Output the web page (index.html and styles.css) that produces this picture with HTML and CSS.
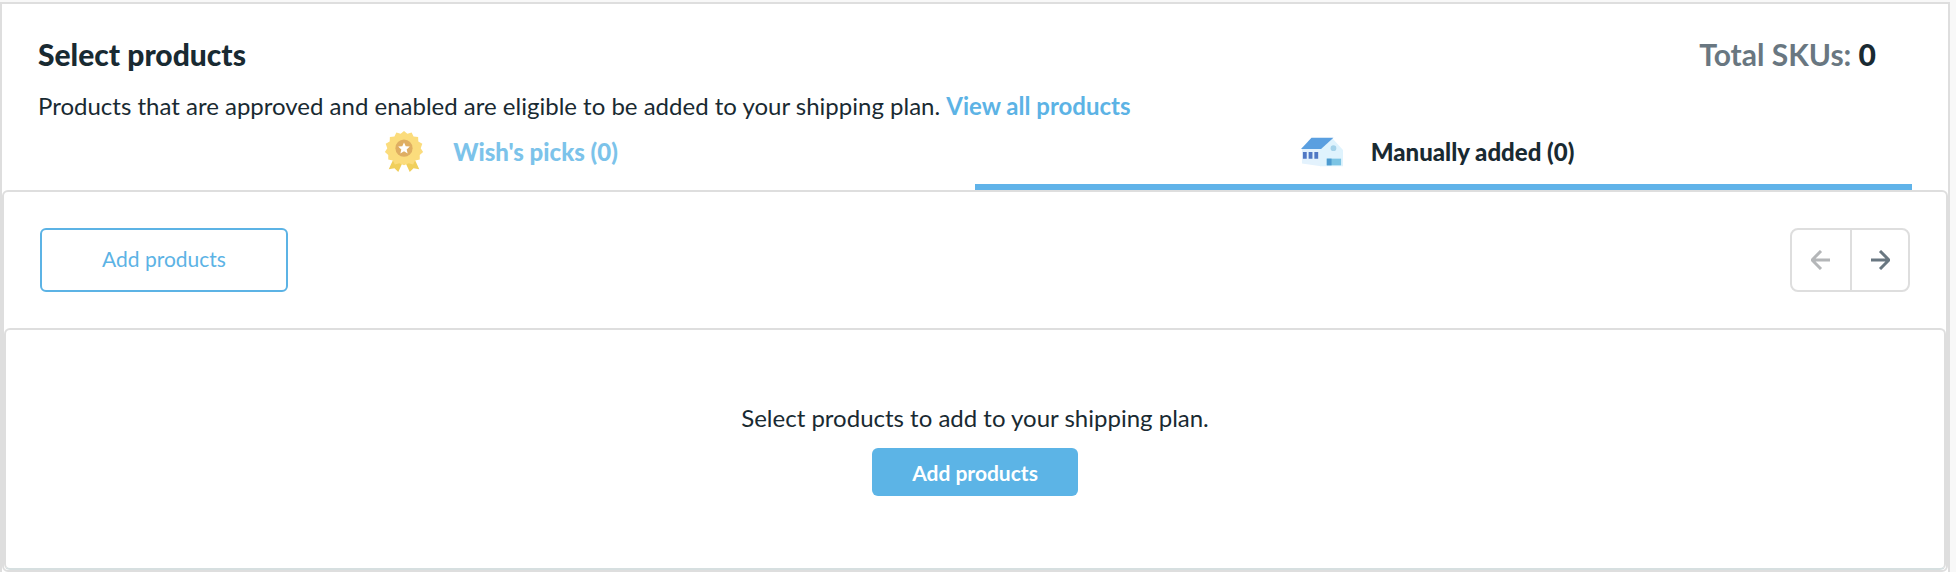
FILE: index.html
```html
<!DOCTYPE html>
<html lang="en">

<head>
  <meta charset="UTF-8">
  <meta name="viewport" content="width=device-width, initial-scale=1.0">
  <title>Select products</title>
  <link rel="stylesheet" href="styles.css">
</head>

<body>
  <main class="card">
    <div class="header">
      <h1 class="title">Select products</h1>
      <div class="total">Total SKUs: <strong>0</strong></div>
    </div>
    <p class="description">
      Products that are approved and enabled are eligible to be added to your shipping plan.
      <a href="#">View all products</a>
    </p>

    <div class="tabs" role="tablist">
      <button type="button" class="tab" role="tab" aria-selected="false">
        <svg class="tab-icon" viewBox="0 0 44 44" aria-hidden="true">
          <path d="M13 26 6 41l6-1 4 4 6-13zM31 26l7 15-6-1-4 4-6-13z" fill="#f0cf5c" />
          <path d="M22 1l3.500 3 4.500-1.500 2 4.300 4.800.5.200 4.800 4.200 2.400-1.700 4.500 2.500 4-3.500 3.300 0 4.700-4.800.9-2.200 4.200-4.600-1.200L22 37l-4.900-2.100-4.600 1.200-2.200-4.200-4.800-.9 0-4.700L2 23l2.500-4-1.700-4.500L7 12.100l.200-4.800 4.800-.5 2-4.300L18.500 4z" fill="#fbdc7c" />
          <circle cx="22" cy="19" r="9" fill="#dfae62" />
          <path d="M22 13l1.800 4 4.300.4-3.300 2.900 1 4.200-3.800-2.200-3.800 2.200 1-4.200-3.300-2.900 4.300-.4z" fill="#fff" />
        </svg>
        <span>Wish's picks (0)</span>
      </button>
      <button type="button" class="tab active" role="tab" aria-selected="true">
        <svg class="tab-icon" viewBox="0 0 44 44" aria-hidden="true">
          <path d="M1 18h20v20L1 35z" fill="#e3f2fd" />
          <path d="M20 20 33 9l11 12v17H20z" fill="#dff3fd" />
          <path d="M11 8h23L21 20H0z" fill="#5a9fe0" />
          <path d="M2 23h4v7H2zM8 23h4v7H8zM14 23h4v7h-4z" fill="#5078c4" />
          <circle cx="34" cy="19" r="3" fill="#a5d3ea" />
          <path d="M27 30h15v7H27z" fill="#7cc4e4" />
          <path d="M27 30h5v7h-5z" fill="#4d9bd0" />
        </svg>
        <span>Manually added (0)</span>
      </button>
    </div>

    <section class="panel">
      <div class="toolbar">
        <button type="button" class="btn btn-outline">Add products</button>
        <div class="pager">
          <button type="button" class="prev" aria-label="Previous page" disabled>
            <svg viewBox="0 0 20 20" aria-hidden="true"><path d="M19 10H2M10 1l-9 9 9 9" /></svg>
          </button>
          <button type="button" class="next" aria-label="Next page">
            <svg viewBox="0 0 20 20" aria-hidden="true"><path d="M1 10h17M10 1l9 9-9 9" /></svg>
          </button>
        </div>
      </div>

      <div class="empty">
        <p>Select products to add to your shipping plan.</p>
        <button type="button" class="btn btn-primary">Add products</button>
      </div>
    </section>
  </main>
</body>

</html>
```
FILE: styles.css
```css
* {
  box-sizing: border-box;
}

body {
  margin: 0;
  padding: 2px 6px 0 0;
  background-color: #f8f8f8;
  color: #192a32;
  font-family: Lato, sans-serif;
  font-size: 24px;
  line-height: 32px;
}

h1,
p {
  margin: 0;
}

button {
  font-family: inherit;
  cursor: pointer;
}

.card {
  background-color: #fff;
  border: 2px solid #dedede;
  border-bottom: none;
}

.header {
  display: flex;
  justify-content: space-between;
  align-items: center;
  padding: 32px 72px 0 36px;
}

.title,
.total {
  font-size: 30px;
  line-height: 36px;
  font-weight: bold;
}

.title {
  font-weight: 900;
}

.total {
  color: #697781;
}

.total strong {
  color: #192a32;
  font-weight: 900;
}

.description {
  padding: 18px 36px 0;
}

.description a {
  color: #5cb3e5;
  font-weight: bold;
  text-decoration: none;
}

/* tabs */
.tabs {
  display: flex;
  padding: 8px 36px 0;
}

.tab {
  flex: 1;
  display: flex;
  align-items: center;
  justify-content: center;
  gap: 28px;
  height: 60px;
  padding: 0 12px 12px 0;
  background: none;
  border: none;
  border-bottom: 6px solid transparent;
  color: #7cc3ea;
  font-size: 24px;
  font-weight: 900;
}

.tab.active {
  color: #192a32;
  border-bottom-color: #60b3e9;
}

.tab-icon {
  width: 42px;
  height: 42px;
}

/* panel */
.panel {
  border: 2px solid #dedede;
  border-radius: 6px;
}

.toolbar {
  display: flex;
  justify-content: space-between;
  align-items: center;
  padding: 36px;
}

.btn {
  border-radius: 6px;
  font-size: 21px;
}

.btn-outline {
  width: 248px;
  height: 64px;
  padding-bottom: 4px;
  background-color: #fff;
  border: 2px solid #5cb3e5;
  color: #5cb3e5;
}

.btn-primary {
  height: 48px;
  padding: 0 40px;
  background-color: #5cb4e6;
  border: none;
  color: #fff;
  font-weight: bold;
}

.pager {
  display: flex;
  border: 2px solid #dedede;
  border-radius: 8px;
}

.pager button {
  display: flex;
  align-items: center;
  justify-content: center;
  width: 58px;
  height: 60px;
  padding: 0;
  background: none;
  border: none;
}

.pager .next {
  border-left: 2px solid #dedede;
}

.pager svg {
  width: 20px;
  height: 20px;
  fill: none;
  stroke: #697781;
  stroke-width: 3;
}

.pager .prev svg {
  stroke: #b4b6b8;
}

.empty {
  display: flex;
  flex-direction: column;
  align-items: center;
  gap: 14px;
  padding: 72px 36px;
  border: 2px solid #dedede;
  border-bottom-color: #d6dfe0;
  border-radius: 6px;
}
```
